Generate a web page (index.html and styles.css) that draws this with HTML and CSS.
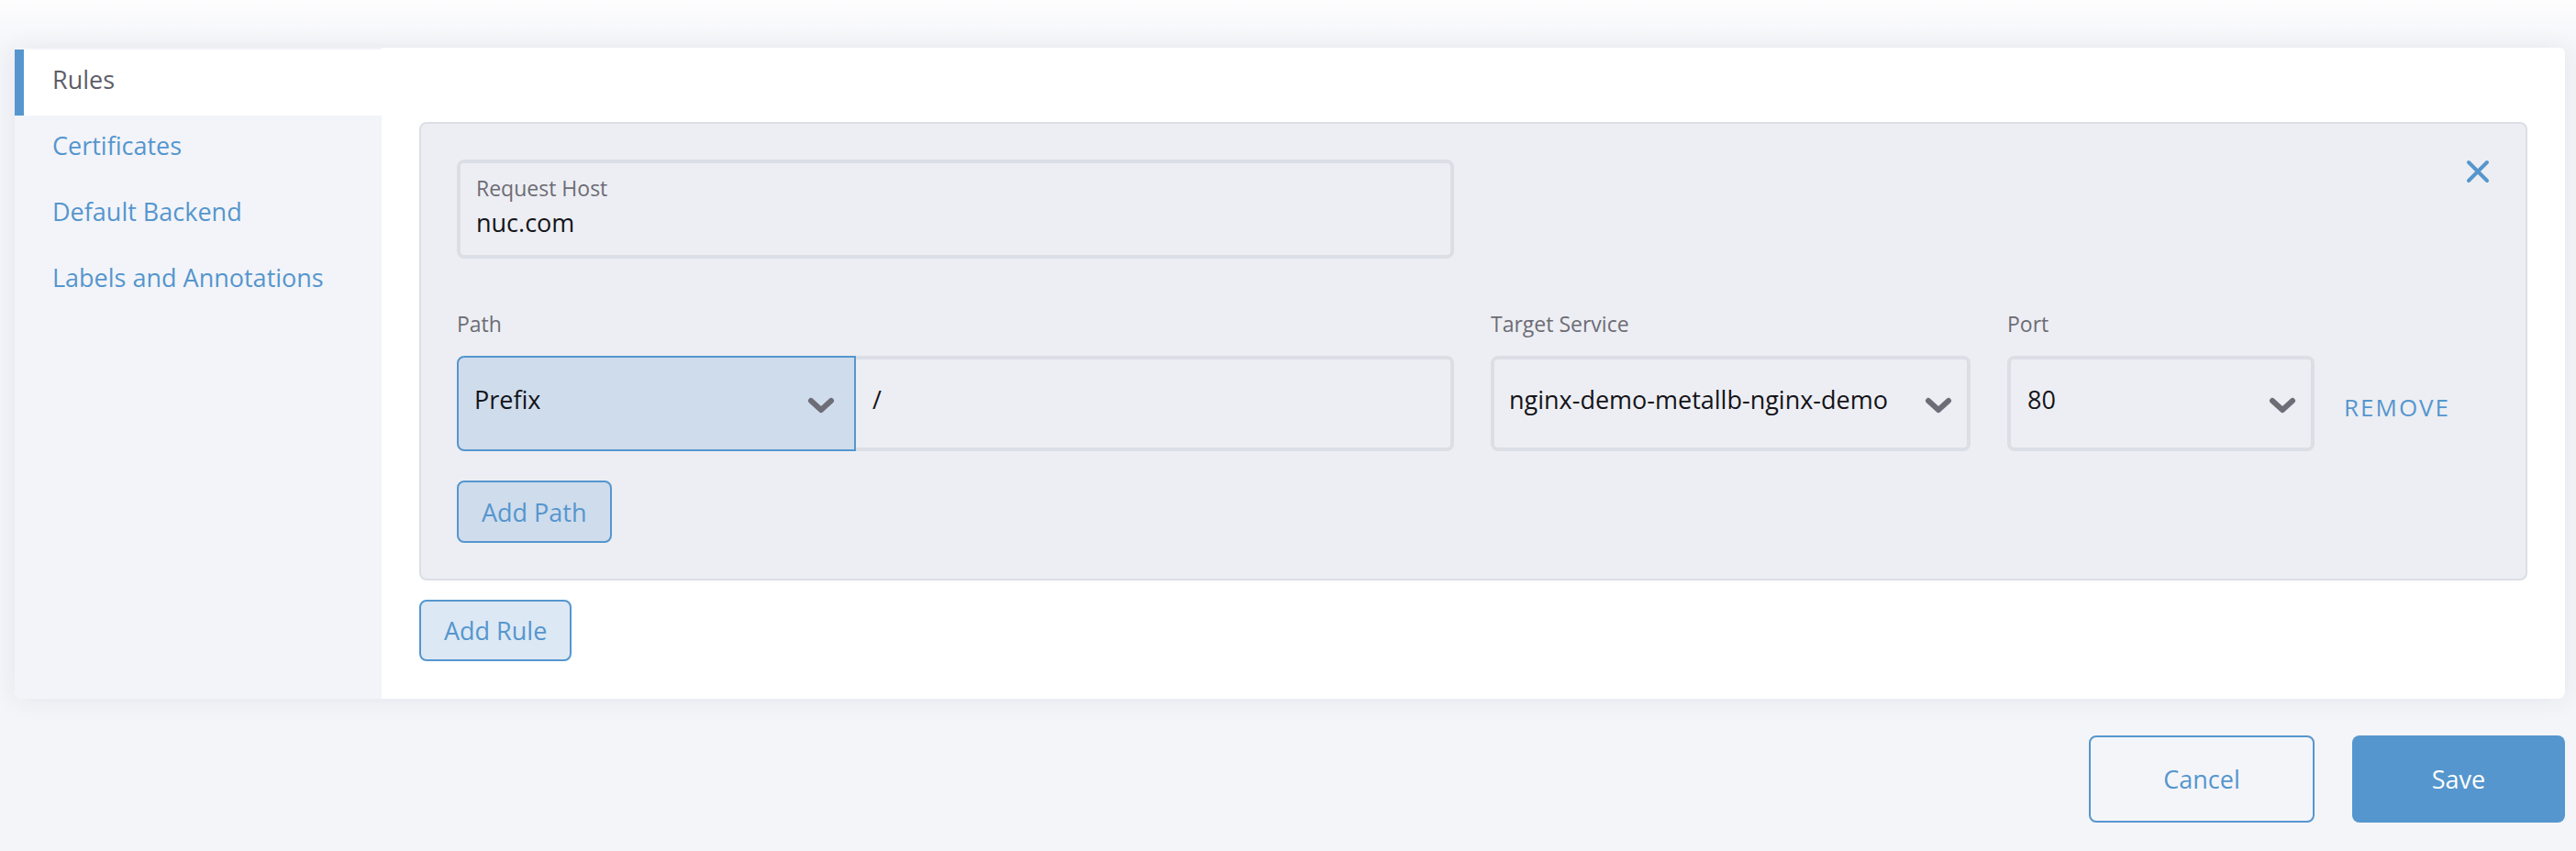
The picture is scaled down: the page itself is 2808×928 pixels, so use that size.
FILE: index.html
```html
<!DOCTYPE html>
<html lang="en">
<head>
<meta charset="utf-8">
<title>Ingress Rules</title>
<link rel="stylesheet" href="styles.css">
</head>
<body>
<div class="page">
  <div class="card">
    <nav class="tabs">
      <div class="tab active">Rules</div>
      <div class="tab">Certificates</div>
      <div class="tab">Default Backend</div>
      <div class="tab">Labels and Annotations</div>
    </nav>
    <section class="content">
      <div class="rule">
        <div class="rule-head">
          <div class="field host">
            <div class="field-label">Request Host</div>
            <div class="field-value">nuc.com</div>
          </div>
          <button class="close" aria-label="Remove rule">
            <svg width="26" height="26" viewBox="0 0 26 26"><path d="M3 3 L23 23 M23 3 L3 23" stroke="#5596ce" stroke-width="4" stroke-linecap="round" fill="none"/></svg>
          </button>
        </div>
        <div class="paths">
          <div class="lbl">Path</div>
          <div class="lbl">Target Service</div>
          <div class="lbl">Port</div>
          <div></div>
          <div class="path-ctl">
            <div class="select prefix"><span>Prefix</span>
              <svg class="chev" width="30" height="18" viewBox="0 0 30 18"><path d="M4 4 L15 14 L26 4" stroke="#6d6d77" stroke-width="6" stroke-linecap="round" stroke-linejoin="round" fill="none"/></svg>
            </div>
            <div class="path-input">/</div>
          </div>
          <div class="select target"><span>nginx-demo-metallb-nginx-demo</span>
            <svg class="chev" width="30" height="18" viewBox="0 0 30 18"><path d="M4 4 L15 14 L26 4" stroke="#6d6d77" stroke-width="6" stroke-linecap="round" stroke-linejoin="round" fill="none"/></svg>
          </div>
          <div class="select port"><span>80</span>
            <svg class="chev" width="30" height="18" viewBox="0 0 30 18"><path d="M4 4 L15 14 L26 4" stroke="#6d6d77" stroke-width="6" stroke-linecap="round" stroke-linejoin="round" fill="none"/></svg>
          </div>
          <button class="remove">Remove</button>
        </div>
        <button class="btn add-path">Add Path</button>
      </div>
      <button class="btn add-rule">Add Rule</button>
    </section>
  </div>
  <div class="footer">
    <button class="btn-lg cancel">Cancel</button>
    <button class="btn-lg save">Save</button>
  </div>
</div>
</body>
</html>
```

FILE: styles.css
```css
* { box-sizing: border-box; }

body {
  margin: 0;
  background: linear-gradient(to bottom, #fdfdfe 0px, #f4f5f9 60px, #f4f5f9 100%);
  font-family: "Open Sans", "Noto Sans", sans-serif;
  min-height: 928px;
}

button {
  font-family: inherit;
  cursor: pointer;
}

.page {
  padding: 52px 12px 0 16px;
}

.card {
  display: flex;
  background: #ffffff;
  border-radius: 0 6px 8px 8px;
  box-shadow: 0 0 28px rgba(40, 50, 80, 0.08);
  overflow: hidden;
}

.tabs {
  width: 400px;
  flex: none;
  background: #f3f4f9;
  padding-top: 2px;
}

.tab {
  height: 72px;
  padding: 0 0 6px 41px;
  line-height: 66px;
  font-size: 27px;
  color: #5596ce;
  white-space: nowrap;
}

.tab.active {
  background: #ffffff;
  color: #5e5e68;
  box-shadow: inset 10px 0 0 #5596ce;
}

.content {
  flex: 1;
  padding: 81px 41px 41px;
}

.rule {
  border: 2px solid #dcdee6;
  border-radius: 8px;
  background: #edeef3;
  padding: 39px;
}

.rule-head {
  display: flex;
  justify-content: space-between;
  align-items: flex-start;
}

.field.host {
  width: 1087px;
  height: 108px;
  border: 4px solid #dcdee6;
  border-radius: 8px;
  padding: 12px 17px 0;
}

.field-label {
  font-size: 23px;
  line-height: 30px;
  color: #6c6c75;
}

.field-value {
  font-size: 27px;
  line-height: 36px;
  color: #141419;
  margin-top: 5px;
}

.close {
  width: 26px;
  height: 26px;
  padding: 0;
  border: 0;
  background: none;
  display: flex;
}

.paths {
  display: grid;
  grid-template-columns: 1087px 523px 335px auto;
  column-gap: 40px;
  row-gap: 20px;
  margin-top: 56px;
}

.lbl {
  font-size: 23px;
  line-height: 30px;
  color: #6c6c75;
}

.path-ctl {
  display: flex;
  height: 104px;
}

.select {
  height: 104px;
  display: flex;
  align-items: center;
  justify-content: space-between;
  padding-bottom: 8px;
  font-size: 27px;
  line-height: 36px;
  color: #141419;
  white-space: nowrap;
}

.select .chev {
  flex: none;
  margin-top: 12px;
}

.prefix {
  width: 435px;
  flex: none;
  background: #cfdcec;
  border: 2px solid #5596ce;
  border-radius: 8px 0 0 8px;
  padding-left: 17px;
  padding-right: 21px;
}

.path-input {
  flex: 1;
  height: 104px;
  border: 4px solid #dcdee6;
  border-left: 0;
  border-radius: 0 8px 8px 0;
  padding: 0 0 8px 18px;
  display: flex;
  align-items: center;
  font-size: 27px;
  line-height: 36px;
  color: #141419;
}

.target,
.port {
  border: 4px solid #dcdee6;
  border-radius: 8px;
  padding-left: 16px;
  padding-right: 16px;
}

.port {
  padding-left: 18px;
}

.remove {
  align-self: center;
  margin: 8px 0 0 -8px;
  padding: 0;
  border: 0;
  background: none;
  font-size: 26px;
  letter-spacing: 2px;
  text-transform: uppercase;
  color: #5596ce;
  justify-self: start;
}

.btn {
  display: block;
  height: 68px;
  padding: 0 25px;
  border: 2px solid #5596ce;
  border-radius: 8px;
  font-size: 27px;
  color: #5596ce;
}

.add-path {
  margin-top: 32px;
  background: #cfdcec;
}

.add-rule {
  margin-top: 21px;
  height: 67px;
  background: #dde8f5;
}

.footer {
  display: flex;
  justify-content: flex-end;
  gap: 41px;
  padding: 40px 0 0 0;
}

.btn-lg {
  height: 95px;
  border-radius: 8px;
  font-size: 27px;
}

.cancel {
  min-width: 246px;
  border: 2px solid #5596ce;
  background: transparent;
  color: #5596ce;
}

.save {
  min-width: 232px;
  border: 0;
  background: #5596ce;
  color: #ffffff;
}
```
